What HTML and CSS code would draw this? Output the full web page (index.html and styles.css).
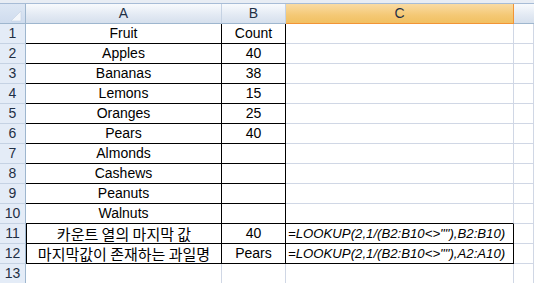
FILE: index.html
```html
<!DOCTYPE html>
<html>
<head>
<meta charset="utf-8">
<link rel="stylesheet" href="styles.css">
</head>
<body>
<div class="sheet">
  <div class="topbar"></div>
  <div class="grid">
    <div class="corner"><svg width="26" height="20" viewBox="0 0 26 20"><polygon points="21,7 21,17 11,17" fill="#f4f7fb" stroke="#c2d0e2" stroke-width="0.6"/></svg></div>
    <div class="ch">A</div>
    <div class="ch">B</div>
    <div class="ch sel">C</div>
    <div class="ch last"></div>

    <div class="rh">1</div><div class="c a b">Fruit</div><div class="c b">Count</div><div class="c"></div><div class="c"></div>
    <div class="rh">2</div><div class="c a b">Apples</div><div class="c b">40</div><div class="c"></div><div class="c"></div>
    <div class="rh">3</div><div class="c a b">Bananas</div><div class="c b">38</div><div class="c"></div><div class="c"></div>
    <div class="rh">4</div><div class="c a b">Lemons</div><div class="c b">15</div><div class="c"></div><div class="c"></div>
    <div class="rh">5</div><div class="c a b">Oranges</div><div class="c b">25</div><div class="c"></div><div class="c"></div>
    <div class="rh">6</div><div class="c a b">Pears</div><div class="c b">40</div><div class="c"></div><div class="c"></div>
    <div class="rh">7</div><div class="c a b">Almonds</div><div class="c b"></div><div class="c"></div><div class="c"></div>
    <div class="rh">8</div><div class="c a b">Cashews</div><div class="c b"></div><div class="c"></div><div class="c"></div>
    <div class="rh">9</div><div class="c a b">Peanuts</div><div class="c b"></div><div class="c"></div><div class="c"></div>
    <div class="rh">10</div><div class="c a b">Walnuts</div><div class="c b"></div><div class="c bb"></div><div class="c"></div>
    <div class="rh">11</div><div class="c a b bl ko">카운트 열의 마지막 값</div><div class="c b">40</div><div class="c b f">=LOOKUP(2,1/(B2:B10&lt;&gt;""),B2:B10)</div><div class="c"></div>
    <div class="rh">12</div><div class="c a b bl ko">마지막값이 존재하는 과일명</div><div class="c b">Pears</div><div class="c b f">=LOOKUP(2,1/(B2:B10&lt;&gt;""),A2:A10)</div><div class="c"></div>
    <div class="rh">13</div><div class="c"></div><div class="c"></div><div class="c"></div><div class="c"></div>
  </div>
</div>
</body>
</html>
```

FILE: styles.css
```css
html, body {
  margin: 0;
  padding: 0;
  background: #ffffff;
  overflow: hidden;
}
.sheet {
  width: 534px;
  height: 283px;
  overflow: hidden;
  font-family: "Liberation Sans", Arial, sans-serif;
  font-size: 14px;
  color: #000;
}
.topbar {
  height: 3px;
  background: #e8edf4;
  border-bottom: 1px solid #a7bcd6;
}
.grid {
  display: grid;
  grid-template-columns: 26px 196px 64px 228px 20px;
  grid-auto-rows: 20px;
}
.grid > div {
  box-sizing: border-box;
  line-height: 19px;
  white-space: nowrap;
  overflow: visible;
}
.corner {
  background: linear-gradient(#dde7f4, #cfdcee);
  border-right: 1px solid #9eb6ce;
  border-bottom: 1px solid #9eb6ce;
}
.corner svg { display: block; }
.ch {
  background: linear-gradient(#f8fafd, #e2e9f3 60%, #d6e0ed);
  border-right: 1px solid #c5d2e3;
  border-bottom: 1px solid #9eb6ce;
  text-align: center;
  color: #1f2f44;
}
.ch.sel {
  background: linear-gradient(#f9dba3, #f4c874 60%, #f1c062);
  border-right: 1px solid #f29436;
  border-bottom: 1px solid #f29436;
}
.ch.last { border-right: none; }
.rh {
  background: #e4ecf7;
  border-right: 1px solid #9eb6ce;
  border-bottom: 1px solid #c5d2e3;
  text-align: center;
  color: #1f2f44;
}
.c {
  border-right: 1px solid #d0d7e5;
  border-bottom: 1px solid #d0d7e5;
  text-align: center;
}
.c.b {
  border-right-color: #000;
  border-bottom-color: #000;
}
.c.bb { border-bottom-color: #000; }
.c.bl { border-left: 1px solid #000; }
.ko {
  font-family: "Noto Sans CJK KR", sans-serif;
  font-size: 15px;
}
.f {
  text-align: left;
  font-style: italic;
  padding-left: 2px;
  font-size: 13.2px;
}
```
